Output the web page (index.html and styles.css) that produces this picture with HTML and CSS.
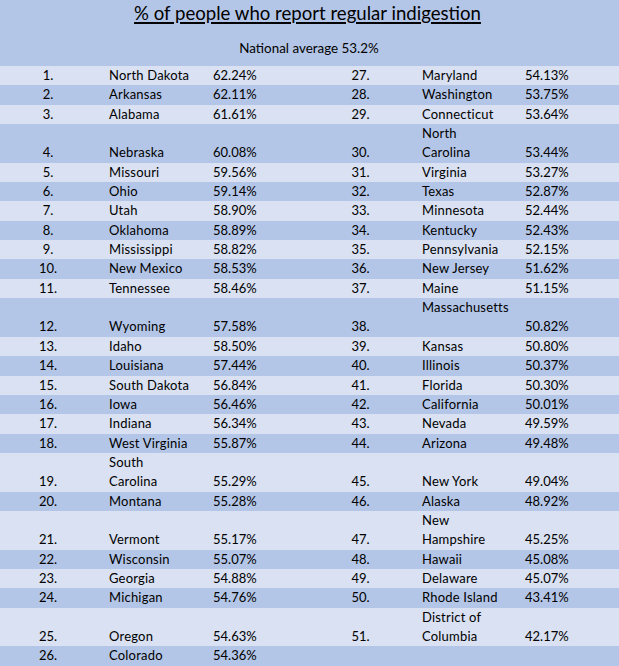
FILE: index.html
```html
<!DOCTYPE html>
<html lang="en">
<head>
<meta charset="utf-8">
<title>% of people who report regular indigestion</title>
<link rel="stylesheet" href="styles.css">
</head>
<body>
<div class="sheet">
  <header class="head">
    <h1 class="title">% of people who report regular indigestion</h1>
    <p class="avg">National average 53.2%</p>
  </header>
  <div class="table">
    <div class="row"><span class="num">1.</span><span class="name">North Dakota</span><span class="pct">62.24%</span><span class="num">27.</span><span class="name r">Maryland</span><span class="pct">54.13%</span></div>
    <div class="row"><span class="num">2.</span><span class="name">Arkansas</span><span class="pct">62.11%</span><span class="num">28.</span><span class="name r">Washington</span><span class="pct">53.75%</span></div>
    <div class="row"><span class="num">3.</span><span class="name">Alabama</span><span class="pct">61.61%</span><span class="num">29.</span><span class="name r">Connecticut</span><span class="pct">53.64%</span></div>
    <div class="row"><span class="num">4.</span><span class="name">Nebraska</span><span class="pct">60.08%</span><span class="num">30.</span><span class="name r">North<br>Carolina</span><span class="pct">53.44%</span></div>
    <div class="row"><span class="num">5.</span><span class="name">Missouri</span><span class="pct">59.56%</span><span class="num">31.</span><span class="name r">Virginia</span><span class="pct">53.27%</span></div>
    <div class="row"><span class="num">6.</span><span class="name">Ohio</span><span class="pct">59.14%</span><span class="num">32.</span><span class="name r">Texas</span><span class="pct">52.87%</span></div>
    <div class="row"><span class="num">7.</span><span class="name">Utah</span><span class="pct">58.90%</span><span class="num">33.</span><span class="name r">Minnesota</span><span class="pct">52.44%</span></div>
    <div class="row"><span class="num">8.</span><span class="name">Oklahoma</span><span class="pct">58.89%</span><span class="num">34.</span><span class="name r">Kentucky</span><span class="pct">52.43%</span></div>
    <div class="row"><span class="num">9.</span><span class="name">Mississippi</span><span class="pct">58.82%</span><span class="num">35.</span><span class="name r">Pennsylvania</span><span class="pct">52.15%</span></div>
    <div class="row"><span class="num">10.</span><span class="name">New Mexico</span><span class="pct">58.53%</span><span class="num">36.</span><span class="name r">New Jersey</span><span class="pct">51.62%</span></div>
    <div class="row"><span class="num">11.</span><span class="name">Tennessee</span><span class="pct">58.46%</span><span class="num">37.</span><span class="name r">Maine</span><span class="pct">51.15%</span></div>
    <div class="row tall"><span class="num">12.</span><span class="name">Wyoming</span><span class="pct">57.58%</span><span class="num">38.</span><span class="name r top">Massachusetts</span><span class="pct">50.82%</span></div>
    <div class="row"><span class="num">13.</span><span class="name">Idaho</span><span class="pct">58.50%</span><span class="num">39.</span><span class="name r">Kansas</span><span class="pct">50.80%</span></div>
    <div class="row"><span class="num">14.</span><span class="name">Louisiana</span><span class="pct">57.44%</span><span class="num">40.</span><span class="name r">Illinois</span><span class="pct">50.37%</span></div>
    <div class="row"><span class="num">15.</span><span class="name">South Dakota</span><span class="pct">56.84%</span><span class="num">41.</span><span class="name r">Florida</span><span class="pct">50.30%</span></div>
    <div class="row"><span class="num">16.</span><span class="name">Iowa</span><span class="pct">56.46%</span><span class="num">42.</span><span class="name r">California</span><span class="pct">50.01%</span></div>
    <div class="row"><span class="num">17.</span><span class="name">Indiana</span><span class="pct">56.34%</span><span class="num">43.</span><span class="name r">Nevada</span><span class="pct">49.59%</span></div>
    <div class="row"><span class="num">18.</span><span class="name">West Virginia</span><span class="pct">55.87%</span><span class="num">44.</span><span class="name r">Arizona</span><span class="pct">49.48%</span></div>
    <div class="row"><span class="num">19.</span><span class="name">South<br>Carolina</span><span class="pct">55.29%</span><span class="num">45.</span><span class="name r">New York</span><span class="pct">49.04%</span></div>
    <div class="row"><span class="num">20.</span><span class="name">Montana</span><span class="pct">55.28%</span><span class="num">46.</span><span class="name r">Alaska</span><span class="pct">48.92%</span></div>
    <div class="row"><span class="num">21.</span><span class="name">Vermont</span><span class="pct">55.17%</span><span class="num">47.</span><span class="name r">New<br>Hampshire</span><span class="pct">45.25%</span></div>
    <div class="row"><span class="num">22.</span><span class="name">Wisconsin</span><span class="pct">55.07%</span><span class="num">48.</span><span class="name r">Hawaii</span><span class="pct">45.08%</span></div>
    <div class="row"><span class="num">23.</span><span class="name">Georgia</span><span class="pct">54.88%</span><span class="num">49.</span><span class="name r">Delaware</span><span class="pct">45.07%</span></div>
    <div class="row"><span class="num">24.</span><span class="name">Michigan</span><span class="pct">54.76%</span><span class="num">50.</span><span class="name r">Rhode Island</span><span class="pct">43.41%</span></div>
    <div class="row"><span class="num">25.</span><span class="name">Oregon</span><span class="pct">54.63%</span><span class="num">51.</span><span class="name r">District of<br>Columbia</span><span class="pct">42.17%</span></div>
    <div class="row"><span class="num">26.</span><span class="name">Colorado</span><span class="pct">54.36%</span><span class="num"></span><span class="name r"></span><span class="pct"></span></div>
  </div>
</div>
</body>
</html>
```

FILE: styles.css
```css
html, body {
  margin: 0;
  padding: 0;
}

body {
  background: #b4c6e7;
  font-family: Lato, "Liberation Sans", sans-serif;
  color: #000;
  width: 619px;
  height: 666px;
  overflow: hidden;
}

.sheet {
  width: 619px;
}

.head {
  height: 66px;
  box-sizing: border-box;
  background: #b4c6e7;
  text-align: center;
  padding-top: 2px;
}

.title {
  margin: 0;
  font-size: 18.6px;
  line-height: 22px;
  font-weight: 400;
  text-decoration: underline;
  text-decoration-thickness: 1.5px;
  text-underline-offset: 2px;
  padding-right: 4px;
}

.avg {
  margin: 16px 0 0;
  font-size: 13.4px;
  line-height: 16px;
  padding-right: 1px;
}

.table {
  font-size: 13px;
  line-height: 19.35px;
}

.row {
  display: grid;
  grid-template-columns: 96px 117px 97px 101px 114px 94px;
  align-items: end;
  white-space: nowrap;
}

.row:nth-child(odd) {
  background: #d9e1f2;
}

.row:nth-child(even) {
  background: #b4c6e7;
}

.tall {
  min-height: 38.7px;
}

.num {
  text-align: center;
}

.name {
  padding-left: 13px;
  letter-spacing: 0.2px;
}

.name.r {
  padding-left: 11px;
}

.top {
  align-self: start;
}
```
